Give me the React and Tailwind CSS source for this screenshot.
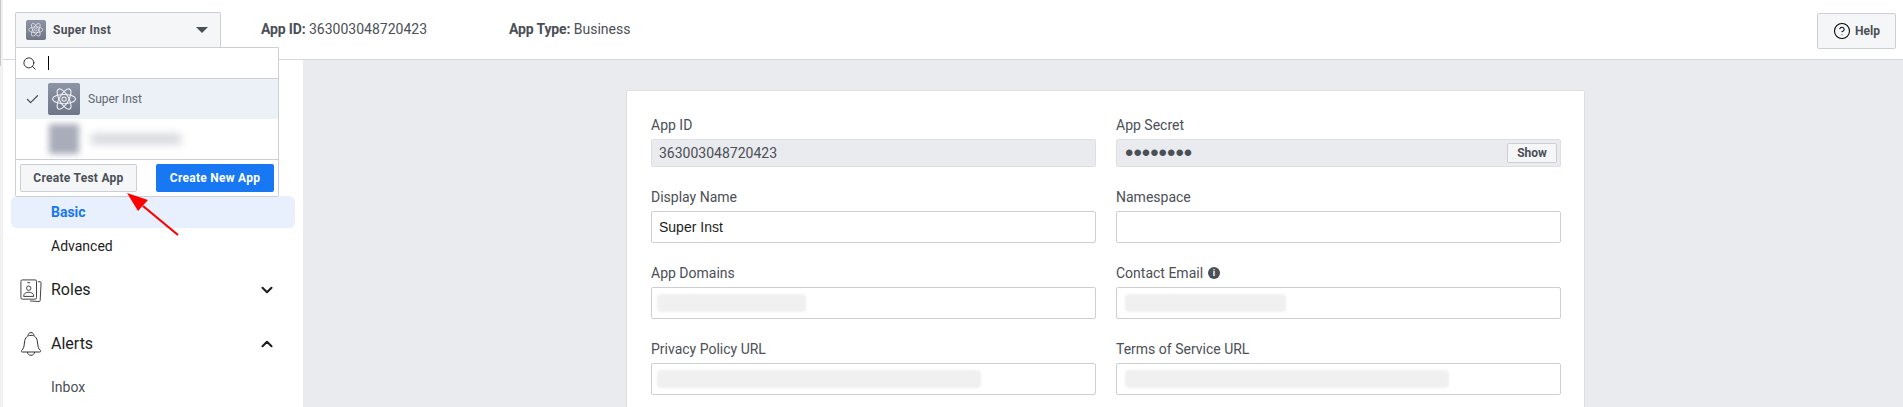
import React from "react";
import { ChevronDown, ChevronUp, Search, Check, CircleHelp } from "lucide-react";

const roboto = "font-['Roboto',sans-serif]";

// App icon: rounded tile with a little atom in it
const AtomTile = ({ className }) => (
  <div className={`flex items-center justify-center rounded-[2px] bg-gradient-to-b from-[#8d94a5] to-[#6f7687] ${className}`}>
    <svg viewBox="0 0 32 32" className="h-[88%] w-[88%]" fill="none" stroke="#eef0f4" strokeWidth="1.2">
      <ellipse cx="16" cy="16" rx="13" ry="5.2" />
      <ellipse cx="16" cy="16" rx="13" ry="5.2" transform="rotate(60 16 16)" />
      <ellipse cx="16" cy="16" rx="13" ry="5.2" transform="rotate(120 16 16)" />
      <circle cx="16" cy="16" r="2.4" />
    </svg>
  </div>
);

const Field = ({ label, info, children }) => (
  <div>
    <div className="flex h-[20px] items-center gap-[5px] text-[14px] leading-[20px] text-[#4b4f56]">
      {label}
      {info && (
        <span className="flex h-[12px] w-[12px] items-center justify-center rounded-full bg-[#4b4f56] text-[9px] font-bold leading-none text-white">
          i
        </span>
      )}
    </div>
    {children}
  </div>
);

const BlurInput = ({ barLeft, barWidth }) => (
  <div className="mt-[4px] flex h-[32px] items-center rounded-[2px] border border-[#ccd0d5] bg-white" style={{ paddingLeft: barLeft }}>
    <div className="h-[18px] rounded-[4px] bg-[#f0f0f0] blur-[1px]" style={{ width: barWidth }} />
  </div>
);

const AccountDropdown = () => (
  <div className="absolute left-[15px] top-[12px] z-10">
    <div className="flex h-[35px] w-[206px] items-center rounded-t-[2px] border border-[#ccd0d5] border-b-0 bg-[#f5f6f7] pl-[10px] pr-[12px]">
      <AtomTile className="h-[20px] w-[20px]" />
      <span className="ml-[7px] text-[12px] font-bold tracking-[0.3px] text-[#4b4f56]">Super Inst</span>
      <span className="ml-auto h-0 w-0 border-x-[6px] border-t-[6px] border-x-transparent border-t-[#4b4f56]" />
    </div>
    <div className="w-[264px] rounded-b-[2px] border border-[#ccd0d5] bg-white">
      <div className="flex h-[31px] items-center border-b border-[#ccd0d5] pl-[6px]">
        <Search size={15} strokeWidth={1.6} className="text-[#333333]" />
        <span className="ml-[11px] h-[14px] w-px bg-black" />
      </div>
      <div className="flex h-[40px] items-center bg-[#ecf0f7] pl-[9px]">
        <Check size={15} strokeWidth={2} className="text-[#4b4f56]" />
        <AtomTile className="ml-[8px] h-[32px] w-[32px]" />
        <span className="ml-[8px] text-[12px] text-[#616770]">Super Inst</span>
      </div>
      <div className="flex h-[41px] items-center overflow-hidden border-b border-[#ccd0d5] pl-[33px]">
        <div className="h-[30px] w-[30px] bg-[#a9adba] blur-[3px]" />
        <div className="ml-[12px] h-[10px] w-[90px] bg-[#d4d5da] blur-[4px]" />
      </div>
      <div className="flex items-center justify-between px-[4px] py-[4px]">
        <button className="h-[28px] w-[117px] rounded-[2px] border border-[#ccd0d5] bg-[#f5f6f7] text-[12px] font-bold tracking-[0.27px] text-[#4b4f56]">
          Create Test App
        </button>
        <button className="h-[28px] w-[118px] rounded-[2px] bg-[#1877f2] text-[12px] font-bold tracking-[0.27px] text-white">
          Create New App
        </button>
      </div>
    </div>
  </div>
);

export default function App() {
  return (
    <div className={`relative h-[407px] overflow-hidden bg-[#e9ebee] ${roboto}`}>
      {/* page edge strip, left of everything */}
      <div className="absolute bottom-0 left-0 top-0 z-20 w-[3px] bg-[#f1f1f1]">
        <div className="h-[66px] w-px bg-[#c8c8c8]" />
      </div>

      {/* Top bar */}
      <header className="flex h-[60px] items-start justify-between border-b border-[#d5d8dd] bg-white pl-[261px] pr-[7px]">
        <div className="flex pt-[19px] text-[14px] leading-[20px] text-[#4b4f56]">
          <div className="w-[248px]">
            <b className="tracking-[-0.15px]">App ID:</b> 363003048720423
          </div>
          <div>
            <b className="tracking-[-0.15px]">App Type:</b> Business
          </div>
        </div>
        <button className="mt-[13px] flex h-[36px] w-[79px] items-center justify-center gap-[4px] rounded-[2px] border border-[#ccd0d5] bg-[#f5f6f7] text-[12px] font-bold text-[#4b4f56]">
          <CircleHelp size={18} strokeWidth={1.4} className="text-black" />
          Help
        </button>
      </header>

      <AccountDropdown />

      <div className="flex">
        {/* Left nav */}
        <aside className="ml-[3px] h-[347px] w-[300px] bg-white pt-[136px]">
          <div className="ml-[8px] flex h-[32px] w-[284px] items-center rounded-[6px] bg-[#e7f0fc] pl-[40px] text-[14px] font-bold text-[#1877f2]">
            Basic
          </div>
          <div className="flex h-[36px] items-center pl-[48px] text-[14px] text-[#1c1e21]">Advanced</div>
          <div className="mt-px flex h-[50px] items-center pl-[17px] pr-[27px] text-[16px] text-[#1c1e21]">
            <svg viewBox="0 0 24 26" className="h-[24px] w-[22px]" fill="none" stroke="#333333" strokeWidth="1">
              <rect x="1" y="2" width="17" height="21" rx="1.5" />
              <path d="M19.5 4h2.5a1 1 0 0 1 1 1l-1 19.5a1 1 0 0 1-1 1l-10-.5" />
              <circle cx="9.500" cy="11" r="2.4" />
              <path d="M4 20c0-3.2 2.500-4.600 5.500-4.600s5.500 1.400 5.500 4.600z" />
              <path d="M8 5h3" />
            </svg>
            <span className="ml-[9px]">Roles</span>
            <ChevronDown size={18} strokeWidth={2.8} className="ml-auto" />
          </div>
          <div className="flex h-[58px] items-center pl-[18px] pr-[27px] text-[16px] text-[#1c1e21]">
            <svg viewBox="1 1 20 24" className="h-[24px] w-[20px]" fill="none" stroke="#333333" strokeWidth="1">
              <path d="M8 4.6C8 3 9.3 1.5 11 1.5s3 1.5 3 3.100" />
              <path d="M1.500 19.500c2.500-2 2.500-4 3-8.500C5 6.500 7.500 4.300 11 4.300s6 2.200 6.500 6.700c.5 4.500.5 6.500 3 8.500.6.600.2 1.500-.6 1.500H2.100c-.8 0-1.200-.9-.6-1.500z" />
              <path d="M7.500 21c0 2 1.500 3.300 3.500 3.300s3.500-1.300 3.500-3.300" />
            </svg>
            <span className="ml-[10px]">Alerts</span>
            <ChevronUp size={18} strokeWidth={2.8} className="ml-auto" />
          </div>
          <div className="flex h-[28px] items-center pl-[48px] text-[14px] text-[#4b4f56]">Inbox</div>
        </aside>

        {/* Settings card */}
        <main className="pl-[323px] pt-[30px]">
          <div className="h-[340px] w-[959px] rounded-t-[2px] border border-[#dddfe2] bg-white pl-[24px] pr-[23px] pt-[24px]">
            <div className="grid grid-cols-2 gap-x-[20px]">
              <Field label="App ID">
                <div className="mt-[4px] flex h-[28px] items-center rounded-[2px] border border-[#dddfe2] bg-[#e9ebee] pl-[7px] text-[14px] text-[#4b4f56]">
                  363003048720423
                </div>
              </Field>
              <Field label="App Secret">
                <div className="mt-[4px] flex h-[28px] items-center justify-between rounded-[2px] border border-[#dddfe2] bg-[#e9ebee] pl-[8px] pr-[3px] text-[#4b4f56]">
                  <span className="font-['Liberation_Sans',sans-serif] text-[24px] leading-[20px]">••••••••</span>
                  <button className="h-[20px] w-[50px] rounded-[2px] border border-[#ccd0d5] bg-[#f5f6f7] text-[12px] font-bold">
                    Show
                  </button>
                </div>
              </Field>
              <div className="mt-[20px]">
                <Field label="Display Name">
                  <input
                    readOnly
                    value="Super Inst"
                    className="mt-[4px] h-[32px] w-full rounded-[2px] border border-[#ccd0d5] bg-white pl-[7px] font-['Liberation_Sans',sans-serif] text-[14px] text-[#1c1e21] outline-none"
                  />
                </Field>
              </div>
              <div className="mt-[20px]">
                <Field label="Namespace">
                  <input readOnly className="mt-[4px] h-[32px] w-full rounded-[2px] border border-[#ccd0d5] bg-white outline-none" />
                </Field>
              </div>
              <div className="mt-[20px]">
                <Field label="App Domains">
                  <BlurInput barLeft={5} barWidth={149} />
                </Field>
              </div>
              <div className="mt-[20px]">
                <Field label="Contact Email" info>
                  <BlurInput barLeft={8} barWidth={161} />
                </Field>
              </div>
              <div className="mt-[20px]">
                <Field label="Privacy Policy URL">
                  <BlurInput barLeft={5} barWidth={324} />
                </Field>
              </div>
              <div className="mt-[20px]">
                <Field label="Terms of Service URL">
                  <BlurInput barLeft={8} barWidth={324} />
                </Field>
              </div>
            </div>
          </div>
        </main>
      </div>

      {/* Red annotation arrow */}
      <svg className="absolute left-[120px] top-[185px] z-20" width="65" height="55" viewBox="0 0 65 55" fill="none">
        <path d="M58 50 L23 21" stroke="#ff0000" strokeWidth="2.2" />
        <path d="M7 8 L28 15 L18 26 Z" fill="#ff0000" />
      </svg>
    </div>
  );
}
